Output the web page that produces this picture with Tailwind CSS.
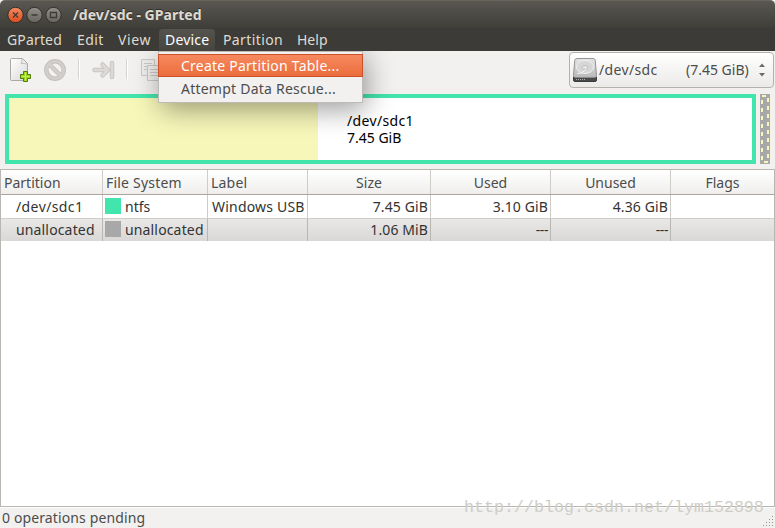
<!DOCTYPE html>
<html lang="en">
<head>
<meta charset="utf-8">
<title>/dev/sdc - GParted</title>
<script src="https://cdn.jsdelivr.net/npm/@tailwindcss/browser@4"></script>
</head>
<body class="bg-[#f2f1f0]">
<div class="relative flex h-[528px] w-[775px] flex-col overflow-hidden font-['Noto_Sans',sans-serif] text-[14px] leading-[18px] text-[#4c4c4c] bg-[#f2f1f0]">
  <header class="flex h-[28px] shrink-0 items-center rounded-t-[5px] border-t border-[#66645b] bg-linear-to-b from-[#595750] to-[#3f3e39] pl-[7px]">
    <svg class="shrink-0" width="56" height="18" viewBox="0 0 56 18">
      <defs><linearGradient id="r" x2="0" y2="1"><stop stop-color="#f58a63"/><stop offset="1" stop-color="#db4b1e"/></linearGradient><linearGradient id="g" x2="0" y2="1"><stop stop-color="#918f86"/><stop offset="1" stop-color="#66645d"/></linearGradient></defs>
      <g stroke="#302f2a"><circle cx="8.500" cy="9" r="7.700" fill="url(#r)"/><circle cx="27.500" cy="9" r="7.700" fill="url(#g)"/><circle cx="46.500" cy="9" r="7.700" fill="url(#g)"/></g>
      <g stroke="#3c3b36" stroke-width="1.300" fill="none"><path d="M6 6.500l5 5M11 6.500l-5 5M24.500 9h6M43.500 6.500h6v5h-6z"/></g>
    </svg>
    <h1 class="ml-[10px] whitespace-nowrap font-bold text-[#dfdbd2] [text-shadow:0_-1px_#2d2c28] tracking-[0.02px]">/dev/sdc - GParted</h1>
  </header>
  <nav class="flex h-[23px] shrink-0 bg-[#3c3b37] pt-px text-[#dfdbd2] whitespace-nowrap">
    <span class="w-[70px] pl-[7px] pt-[2px] tracking-[0.15px]">GParted</span>
    <span class="w-[41px] pl-[7px] pt-[2px] tracking-[0.4px]">Edit</span>
    <span class="w-[48px] pl-[7px] pt-[2px] tracking-[0.6px]">View</span>
    <span class="w-[56px] rounded-t-[4px] bg-linear-to-b from-[#55534d] to-[#464540] pl-[6px] pt-[2px] text-white tracking-[0.2px]">Device</span>
    <span class="w-[75px] pl-[8px] pt-[2px] tracking-[0.4px]">Partition</span>
    <span class="pl-[7px] pt-[2px]">Help</span>
  </nav>
  <section class="flex h-[43px] shrink-0 justify-between">
    <svg width="180" height="43" viewBox="0 0 180 43">
      <defs><linearGradient id="p" x2="1" y2="1"><stop stop-color="#fff"/><stop offset="1" stop-color="#d8d8d8"/></linearGradient></defs>
      <path d="M11.500 7.500h11l5 5v16q0 1-1 1h-15q-1 0-1-1v-20q0-1 1-1z" fill="url(#p)" stroke="#a9aaa7"/><path d="M21.500 7.500c1 2 .5 4-.5 5 2-.5 5 0 6.500 1" fill="#eee" stroke="#b0b0ad" stroke-width=".8"/>
      <path d="M23.500 20.500h4v3h3v4h-3v3h-4v-3h-3v-4h3z" fill="#9bd51e" stroke="#4e7d0a"/><path d="M25.500 21.500v8M21.500 25.500h8" stroke="#c6ee55"/>
      <g fill="none" stroke="#c3c0be" stroke-width="4.500"><circle cx="55" cy="19" r="8.700"/><path d="M49 13l12 12"/></g>
      <g fill="none" stroke="#d2cfcd" stroke-width="2.500"><circle cx="55" cy="19" r="8.700"/><path d="M49 13l12 12"/></g>
      <path d="M78.500 8v20M126.500 8v20" stroke="#d5d3d0"/><path d="M79.500 8v20M127.500 8v20" stroke="#fff"/>
      <g fill="none" stroke-linecap="round" stroke-linejoin="round"><path d="M94.500 19h13M102.500 13.500l5.500 5.500-5.500 5.500M112 12v14" stroke="#c8c5c3" stroke-width="4.500"/><path d="M94.500 19h13M102.500 13.500l5.500 5.500-5.500 5.500M112 12v14" stroke="#dcdad8" stroke-width="2.500"/></g>
      <g fill="#efeeed" stroke="#cbc9c6"><path d="M141.500 8.500h13v16h-13z"/><path d="M144 12.500h8M144 15.500h5M144 18.500h3"/><path d="M147.500 14.500h13v15h-13z"/><path d="M150 18.500h8M150 21.500h8M150 24.500h8"/></g>
    </svg>
    <div class="mr-px mt-px flex h-[36px] w-[205px] items-center rounded-[4px] border border-[#b4b1ad] bg-linear-to-b from-white to-[#ebeae8] pl-[2px] whitespace-nowrap">
      <svg class="shrink-0" width="26" height="26" viewBox="0 0 26 26">
        <defs><linearGradient id="d" x2="0" y2="1"><stop stop-color="#e4e4e4"/><stop offset="1" stop-color="#b8b8b8"/></linearGradient></defs>
        <path d="M1.500 20h23v3q0 1.500-1.500 1.500H3q-1.500 0-1.500-1.500z" fill="#4a4a4a" stroke="#3b3b3b"/><path d="M5 1.500h16q2 0 2.300 2l1.200 15q0 2-2 2h-19q-2 0-2-2l1.200-15q.3-2 2.300-2z" fill="url(#d)" stroke="#8b8b8b" stroke-width=".9"/>
        <ellipse cx="13" cy="10" rx="8.500" ry="6.500" fill="#d6d6d6" stroke="#f1f1f1"/><ellipse cx="13" cy="10.500" rx="3" ry="2" fill="#e5e5e5" stroke="#b5b5b5" stroke-width=".7"/><path d="M5 16.500q4 1 9-4" fill="none" stroke="#f3f3f3"/><path d="M4 22.500h9" stroke="#aaa" stroke-dasharray="1 1"/>
      </svg>
      <span class="ml-px w-[87px] tracking-[0.35px]">/dev/sdc</span><span class="w-[72px]">(7.45 GiB)</span>
      <svg width="8" height="14" viewBox="0 0 8 14" fill="#6c6b68"><path d="M1 4l3-3.500L7 4zM1 10h6l-3 3.500z"/></svg>
    </div>
  </section>
  <section class="flex h-[75px] shrink-0 gap-[4px] pl-[5px]">
    <div class="flex h-[70px] w-[751px] border-4 border-[#42e5ac] bg-white text-black">
      <div class="w-[309px] bg-[#f7f7ba]"></div>
      <div class="ml-[29px] pt-[14px] leading-[17px]"><p class="tracking-[0.35px]">/dev/sdc1</p><p>7.45 GiB</p></div>
    </div>
    <svg width="10" height="70" viewBox="0 0 10 70"><path d="M0 0h10v70H0z" fill="#a8a8a8"/><path d="M2 6v60M8 4v63" stroke="#f7f7ba" stroke-width="2" stroke-dasharray="4 4"/><path d="M2 2h4M4 68h4" stroke="#f7f7ba" stroke-width="2"/></svg>
  </section>
  <main class="h-[338px] shrink-0 border border-[#b9b6b1] bg-white whitespace-nowrap">
    <div class="grid h-[25px] grid-cols-[102px_105px_100px_123px_120px_120px_103px] border-b border-[#aaa69f] bg-linear-to-b from-white to-[#efeeed] text-center *:border-r *:border-[#cfccc8] *:pt-[4px] *:last:border-r-0">
      <span class="pl-[3px] text-left">Partition</span><span class="pl-[3px] text-left tracking-[0.2px]">File System</span><span class="pl-[3px] text-left tracking-[0.2px]">Label</span><span>Size</span><span>Used</span><span>Unused</span><span>Flags</span>
    </div>
    <div class="grid h-[24px] grid-cols-[102px_105px_100px_123px_120px_120px_103px] border-b border-[#cfcdca] text-right text-[#333] *:border-r *:border-[#cfccc8] *:pr-[2px] *:pt-[3px] *:last:border-r-0">
      <span class="pl-[15px] text-left tracking-[0.4px]">/dev/sdc1</span><span class="flex gap-[4px] pl-[2px]"><i class="size-4 bg-[#42e5ac]"></i>ntfs</span><span class="pl-[4px] text-left tracking-[0.2px]">Windows USB</span><span class="tracking-[0.12px]">7.45 GiB</span><span class="tracking-[0.12px]">3.10 GiB</span><span class="tracking-[0.12px]">4.36 GiB</span><span></span>
    </div>
    <div class="grid h-[22px] grid-cols-[102px_105px_100px_123px_120px_120px_103px] bg-linear-to-b from-[#e9e8e7] to-[#d9d8d6] text-right text-[#333] *:border-r *:border-[#b9b6b2] *:pr-[2px] *:pt-[2px] *:last:border-r-0">
      <span class="pl-[15px] text-left tracking-[0.15px]">unallocated</span><span class="flex gap-[4px] pl-[2px] tracking-[0.15px]"><i class="size-4 bg-[#a8a8a8]"></i>unallocated</span><span></span><span class="tracking-[0.1px]">1.06 MiB</span><span class="tracking-[-0.4px]">---</span><span class="tracking-[-0.4px]">---</span><span></span>
    </div>
  </main>
  <footer class="flex h-[21px] shrink-0 justify-between border-t border-white pl-[2px] pt-px"><span class="tracking-[0.12px]">0 operations pending</span>
    <svg class="self-end" width="13" height="13" viewBox="0 0 13 13" fill="#96938e"><path d="M10 1h1v1h-1zM7 4h1v1H7zM10 4h1v1h-1zM4 7h1v1H4zM7 7h1v1H7zM10 7h1v1h-1zM1 10h1v1H1zM4 10h1v1H4zM7 10h1v1H7zM10 10h1v1h-1z"/></svg>
  </footer>
  <div class="absolute left-[158px] top-[51px] h-[52px] w-[205px] border border-[#bebbb7] bg-[#f2f1f0] pt-[2px] shadow-[3px_6px_28px_0px_#0006] [clip-path:inset(0_-40px_-50px_-40px)] whitespace-nowrap">
    <div class="-mx-px h-[23px] border border-[#cc5128] bg-linear-to-b from-[#f6895f] to-[#eb6d3b] pl-[22px] pt-[2px] text-white tracking-[0.23px]">Create Partition Table...</div>
    <div class="pl-[22px] pt-[3px] tracking-[0.23px]">Attempt Data Rescue...</div>
  </div>
  <div class="absolute left-[464px] top-[498px] whitespace-nowrap font-['Liberation_Mono',monospace] text-[16.67px] leading-[20px] text-[#cfcdc5]">http://blog.csdn.net/lym152898</div>
</div>
</body>
</html>
